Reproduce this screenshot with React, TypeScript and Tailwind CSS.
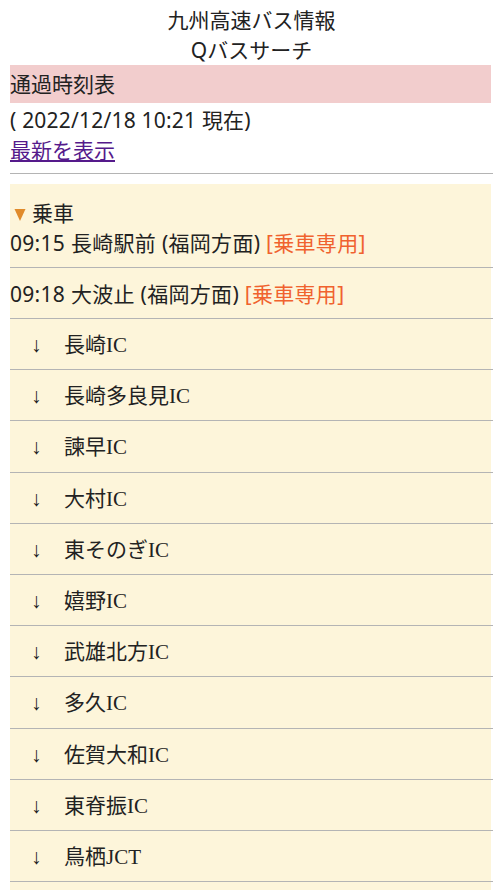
const stops = [
  "長崎IC",
  "長崎多良見IC",
  "諫早IC",
  "大村IC",
  "東そのぎIC",
  "嬉野IC",
  "武雄北方IC",
  "多久IC",
  "佐賀大和IC",
  "東脊振IC",
  "鳥栖JCT",
]

export default function App() {
  return (
    <div
      className="min-h-screen bg-white text-[21px] text-[#222] pl-[10px] pr-[7px]"
      style={{ fontFamily: '"Noto Sans", "Noto Sans CJK JP", sans-serif' }}
    >
      <div className="pt-[5px] text-center leading-[30px]">
        <div>九州高速バス情報</div>
        <div>Qバスサーチ</div>
      </div>

      <div className="mr-[2px] h-[38px] bg-[#f2cdcd] leading-[38px]">通過時刻表</div>

      <div className="leading-[30px] pt-[2px] tracking-[0.2px]">( 2022/12/18 10:21 現在)</div>
      <a href="#" className="block leading-[30px] text-[#551a8b] underline underline-offset-2">
        最新を表示
      </a>

      <hr className="mt-[8px] border-t border-[#b4b4b4]" />

      {/* 時刻表 */}
      <div className="mt-[10px] mr-[2px] bg-[#fdf5da] pb-[9px]">
        <div className="pt-[14px] leading-[30px] flex items-center">
          <svg width="14" height="14" viewBox="0 0 14 14" className="ml-[3px] mr-[5px] mt-[3px]">
            <polygon points="1.5,1 12.5,1 7,13" fill="#e08b2b" />
          </svg>
          <span>乗車</span>
        </div>
        <div className="pb-[9px] leading-[30px] border-b border-[#b4b4b4] -mr-[2px] tracking-[0.3px]">
          09:15 長崎駅前 (福岡方面) <span className="text-[#f0622e]">[乗車専用]</span>
        </div>
        <div className="pt-[11px] pb-[9px] leading-[30px] border-b border-[#b4b4b4] -mr-[2px] tracking-[0.3px]">
          09:18 大波止 (福岡方面) <span className="text-[#f0622e]">[乗車専用]</span>
        </div>

        {stops.map((s) => (
          <div
            key={s}
            className="pt-[11px] pb-[9.2px] leading-[30px] border-b border-[#b4b4b4] -mr-[2px] flex"
            style={{ fontFamily: '"Liberation Serif", "Noto Sans CJK JP", serif' }}
          >
            <span className="w-[54px] pl-[21px]">↓</span>
            <span>{s}</span>
          </div>
        ))}
      </div>
    </div>
  )
}
